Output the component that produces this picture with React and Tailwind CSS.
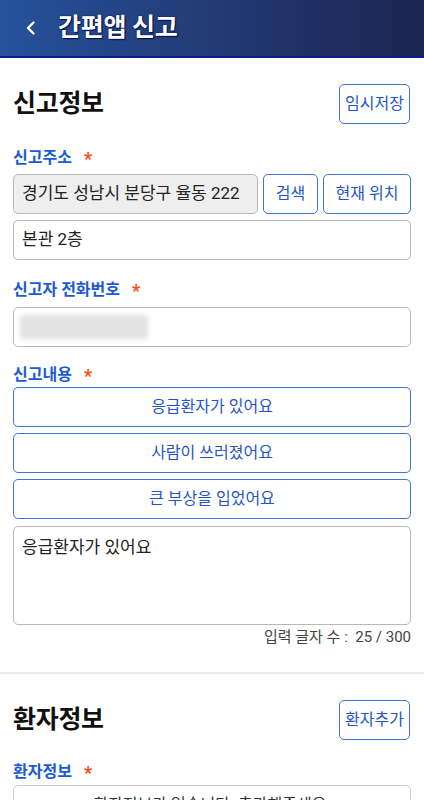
import React from "react";

const font = { fontFamily: 'Roboto, "Noto Sans CJK KR", "Noto Sans", sans-serif' };

function Label({ children }) {
  return (
    <div className="flex items-center h-[22px] text-[16px] font-bold text-[#1a5bd4] leading-none">
      <span>{children}</span>
      <span className="ml-[12px] text-[#ff4b12] text-[18px] mt-[2px]">*</span>
    </div>
  );
}

function OutlineBtn({ children, className = "" }) {
  return (
    <button className={"h-[40px] rounded-[5px] border border-[#3f73d6] bg-white text-[#1f55c8] text-[16px] flex items-center justify-center " + className}>
      {children}
    </button>
  );
}

export default function App() {
  return (
    <div style={font} className="w-[424px] h-[800px] overflow-hidden bg-white">
      <header className="h-[58px] bg-gradient-to-r from-[#25529c] to-[#1c2450] border-b-2 border-[#0b1d8c] flex items-center">
        <svg width="14" height="16" viewBox="0 0 14 16" className="ml-[24px]">
          <path d="M9.5 2.5 L4 8 L9.5 13.5" stroke="white" strokeWidth="2.4" fill="none" strokeLinecap="round" strokeLinejoin="round" />
        </svg>
        <h1 className="ml-[20px] text-white text-[25px] font-bold tracking-[-0.3px] [text-shadow:0_0_2px_#06104a,1px_1px_1px_#06104a]">간편앱 신고</h1>
      </header>

      <div className="px-[13px]">
        <div className="flex items-center justify-between pt-[26px]">
          <h2 className="text-[25px] font-bold text-[#111] tracking-[-0.3px]">신고정보</h2>
          <OutlineBtn className="w-[71px] h-[39px] mr-[1px]">임시저장</OutlineBtn>
        </div>

        <div className="mt-[23px]"><Label>신고주소</Label></div>
        <div className="mt-[5px] flex gap-[5px]">
          <div className="w-[245px] h-[40px] rounded-[5px] border border-[#b8b8b8] bg-[#eeeeee] flex items-center pl-[8px] text-[17px] text-[#222] whitespace-nowrap">경기도 성남시 분당구 율동 222</div>
          <OutlineBtn className="w-[55px]">검색</OutlineBtn>
          <OutlineBtn className="w-[88px]">현재 위치</OutlineBtn>
        </div>
        <div className="mt-[6px] h-[40px] w-[398px] rounded-[5px] border border-[#b8b8b8] flex items-center pl-[8px] text-[17px] text-[#222]">본관 2층</div>

        <div className="mt-[19px]"><Label>신고자 전화번호</Label></div>
        <div className="mt-[6px] h-[40px] w-[398px] rounded-[5px] border border-[#b8b8b8] flex items-center pl-[6px]">
          <div className="w-[128px] h-[24px] bg-[#e3e3e3] blur-[2px] rounded-[2px]" />
        </div>

        <div className="mt-[17px]"><Label>신고내용</Label></div>
        <div className="mt-[1px] flex flex-col gap-[6px] w-[398px]">
          <OutlineBtn className="w-full">응급환자가 있어요</OutlineBtn>
          <OutlineBtn className="w-full">사람이 쓰러졌어요</OutlineBtn>
          <OutlineBtn className="w-full">큰 부상을 입었어요</OutlineBtn>
        </div>
        <div className="mt-[7px] h-[99px] w-[398px] rounded-[5px] border border-[#b8b8b8] px-[8px] pt-[8px] text-[17px] text-[#222] leading-[24px]">응급환자가 있어요</div>
        <div className="mt-[2px] w-[398px] text-right text-[15px] text-[#444] leading-[20px]">입력 글자 수 :&nbsp; 25 / 300</div>
      </div>

      <div className="mt-[25px] h-[2px] bg-[#ececec]" />

      <div className="px-[13px]">
        <div className="flex items-center justify-between pt-[26px]">
          <h2 className="text-[25px] font-bold text-[#111] tracking-[-0.3px]">환자정보</h2>
          <OutlineBtn className="w-[71px] h-[39px] mr-[1px]">환자추가</OutlineBtn>
        </div>
        <div className="mt-[21px]"><Label>환자정보</Label></div>
        <div className="mt-[2px] h-[40px] w-[398px] rounded-[5px] border border-[#cfcfcf] flex items-center justify-center text-[16px] text-[#333]">환자정보가 없습니다. 추가해주세요.</div>
      </div>
    </div>
  );
}
